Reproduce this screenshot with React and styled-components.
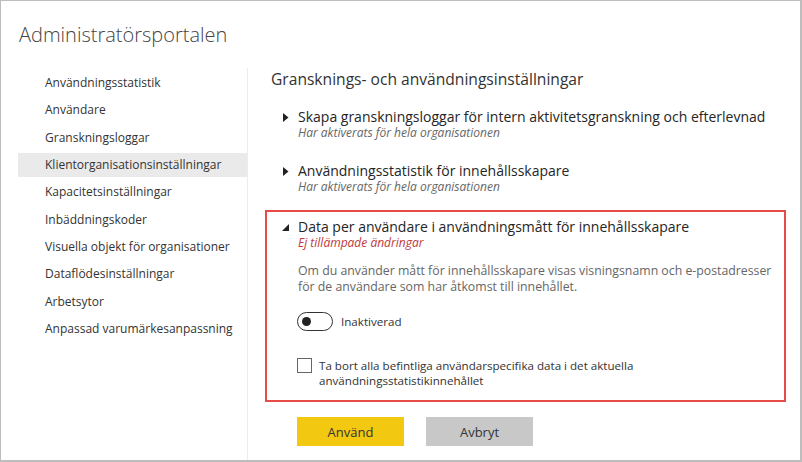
import React from "react";
import styled, { createGlobalStyle } from "styled-components";

const Global = createGlobalStyle`
  html, body { margin: 0; padding: 0; background: #fff; }
  body { font-family: "Open Sans", "Liberation Sans", sans-serif; color: #333; }
  * { box-sizing: border-box; }
`;

const Frame = styled.div`
  width: 802px;
  height: 462px;
  border-style: solid;
  border-color: #bdbdbd;
  border-width: 1px 2px 2px 1px;
  display: flex;
  flex-direction: column;
  overflow: hidden;
`;

const Header = styled.header`
  height: 67px;
  padding: 20px 0 0 18px;
`;

const Title = styled.h1`
  margin: 0;
  font-weight: 300;
  font-size: 20px;
  line-height: 28px;
  color: #444;
`;

const Body = styled.div`
  flex: 1;
  display: grid;
  grid-template-columns: 230px 1fr;
  margin-left: 17px;
  min-height: 0;
`;

const Sidebar = styled.nav`
  border-right: 1px solid #ececec;
  padding-top: 3px;
  display: flex;
  flex-direction: column;
  gap: 3.33px;
`;

const NavItem = styled.div`
  height: 24px;
  line-height: 24px;
  padding-left: 27px;
  font-size: 12px;
  color: #333;
  white-space: nowrap;
  background: ${(p) => (p.$active ? "#eaeaea" : "transparent")};
`;

const Content = styled.main`
  padding: 0 20px 0 23px;
  display: flex;
  flex-direction: column;
`;

const Heading = styled.h2`
  margin: 1px 0 19px;
  font-weight: 400;
  font-size: 15.6px;
  line-height: 20px;
  color: #333;
`;

const Setting = styled.section`
  display: grid;
  grid-template-columns: 27px 1fr;
  margin-bottom: ${(p) => p.$mb || 0}px;
`;

const Caret = styled.div`
  height: 18px;
  display: flex;
  align-items: center;
  justify-content: center;
  padding-left: 2px;
`;

const SettingTitle = styled.div`
  font-size: 14px;
  line-height: 18px;
  color: #252525;
  white-space: nowrap;
`;

const Status = styled.div`
  font-size: 12px;
  line-height: 14px;
  font-style: italic;
  color: ${(p) => (p.$warn ? "#c0393b" : "#666")};
`;

const Highlight = styled.div`
  margin: 0 -6px;
  border: 2px solid #e84a4a;
  padding: 6px 4px 12px;
`;

const Description = styled.p`
  margin: 13px 0 0;
  font-size: 12.3px;
  line-height: 16px;
  color: #666;
`;

const ToggleRow = styled.label`
  margin: 17px 0 0 -1px;
  display: flex;
  align-items: center;
  gap: 8px;
  font-size: 11.6px;
  color: #333;
`;

const Track = styled.span`
  width: 36px;
  height: 19px;
  border: 1px solid #333;
  border-radius: 10px;
  display: flex;
  align-items: center;
  padding-left: 4px;
`;

const Knob = styled.span`
  width: 9px;
  height: 9px;
  border-radius: 50%;
  background: #222;
`;

const CheckRow = styled.label`
  margin: 27px 0 0 -1px;
  display: flex;
  align-items: flex-start;
  gap: 7px;
  font-size: 11.6px;
  line-height: 15px;
  color: #333;
`;

const Box = styled.span`
  flex: none;
  width: 15px;
  height: 15px;
  border: 1px solid #666;
  background: #fff;
`;

const Actions = styled.div`
  margin: 15px 0 0 26px;
  display: flex;
  gap: 22px;
`;

const Button = styled.button`
  width: 107px;
  height: 29px;
  border: none;
  font-family: inherit;
  font-size: 13px;
  color: #333;
  background: ${(p) => (p.$primary ? "#f2c811" : "#c8c8c8")};
`;

const CollapsedIcon = () => (
  <svg width="6" height="9" viewBox="0 0 6 9">
    <path d="M0 0 L5.5 4.5 L0 9 Z" fill="#222" />
  </svg>
);

const ExpandedIcon = () => (
  <svg width="7" height="7" viewBox="0 0 7 7">
    <path d="M7 0 L7 7 L0 7 Z" fill="#222" />
  </svg>
);

const navItems = [
  "Användningsstatistik",
  "Användare",
  "Granskningsloggar",
  "Klientorganisationsinställningar",
  "Kapacitetsinställningar",
  "Inbäddningskoder",
  "Visuella objekt för organisationer",
  "Dataflödesinställningar",
  "Arbetsytor",
  "Anpassad varumärkesanpassning",
];

export default function App() {
  return (
    <>
      <Global />
      <Frame>
        <Header>
          <Title>Administratörsportalen</Title>
        </Header>
        <Body>
          <Sidebar>
            {navItems.map((t, i) => (
              <NavItem key={t} $active={i === 3}>
                {t}
              </NavItem>
            ))}
          </Sidebar>
          <Content>
            <Heading>Gransknings- och användningsinställningar</Heading>
            <Setting $mb={22}>
              <Caret>
                <CollapsedIcon />
              </Caret>
              <div>
                <SettingTitle>
                  Skapa granskningsloggar för intern aktivitetsgranskning och efterlevnad
                </SettingTitle>
                <Status>Har aktiverats för hela organisationen</Status>
              </div>
            </Setting>
            <Setting $mb={16}>
              <Caret>
                <CollapsedIcon />
              </Caret>
              <div>
                <SettingTitle>Användningsstatistik för innehållsskapare</SettingTitle>
                <Status>Har aktiverats för hela organisationen</Status>
              </div>
            </Setting>
            <Highlight>
              <Setting>
                <Caret>
                  <ExpandedIcon />
                </Caret>
                <div>
                  <SettingTitle>
                    Data per användare i användningsmått för innehållsskapare
                  </SettingTitle>
                  <Status $warn>Ej tillämpade ändringar</Status>
                  <Description>
                    Om du använder mått för innehållsskapare visas visningsnamn och e-postadresser
                    <br />
                    för de användare som har åtkomst till innehållet.
                  </Description>
                  <ToggleRow>
                    <Track>
                      <Knob />
                    </Track>
                    Inaktiverad
                  </ToggleRow>
                  <CheckRow>
                    <Box />
                    <span>
                      Ta bort alla befintliga användarspecifika data i det aktuella
                      <br />
                      användningsstatistikinnehållet
                    </span>
                  </CheckRow>
                </div>
              </Setting>
            </Highlight>
            <Actions>
              <Button $primary>Använd</Button>
              <Button>Avbryt</Button>
            </Actions>
          </Content>
        </Body>
      </Frame>
    </>
  );
}
